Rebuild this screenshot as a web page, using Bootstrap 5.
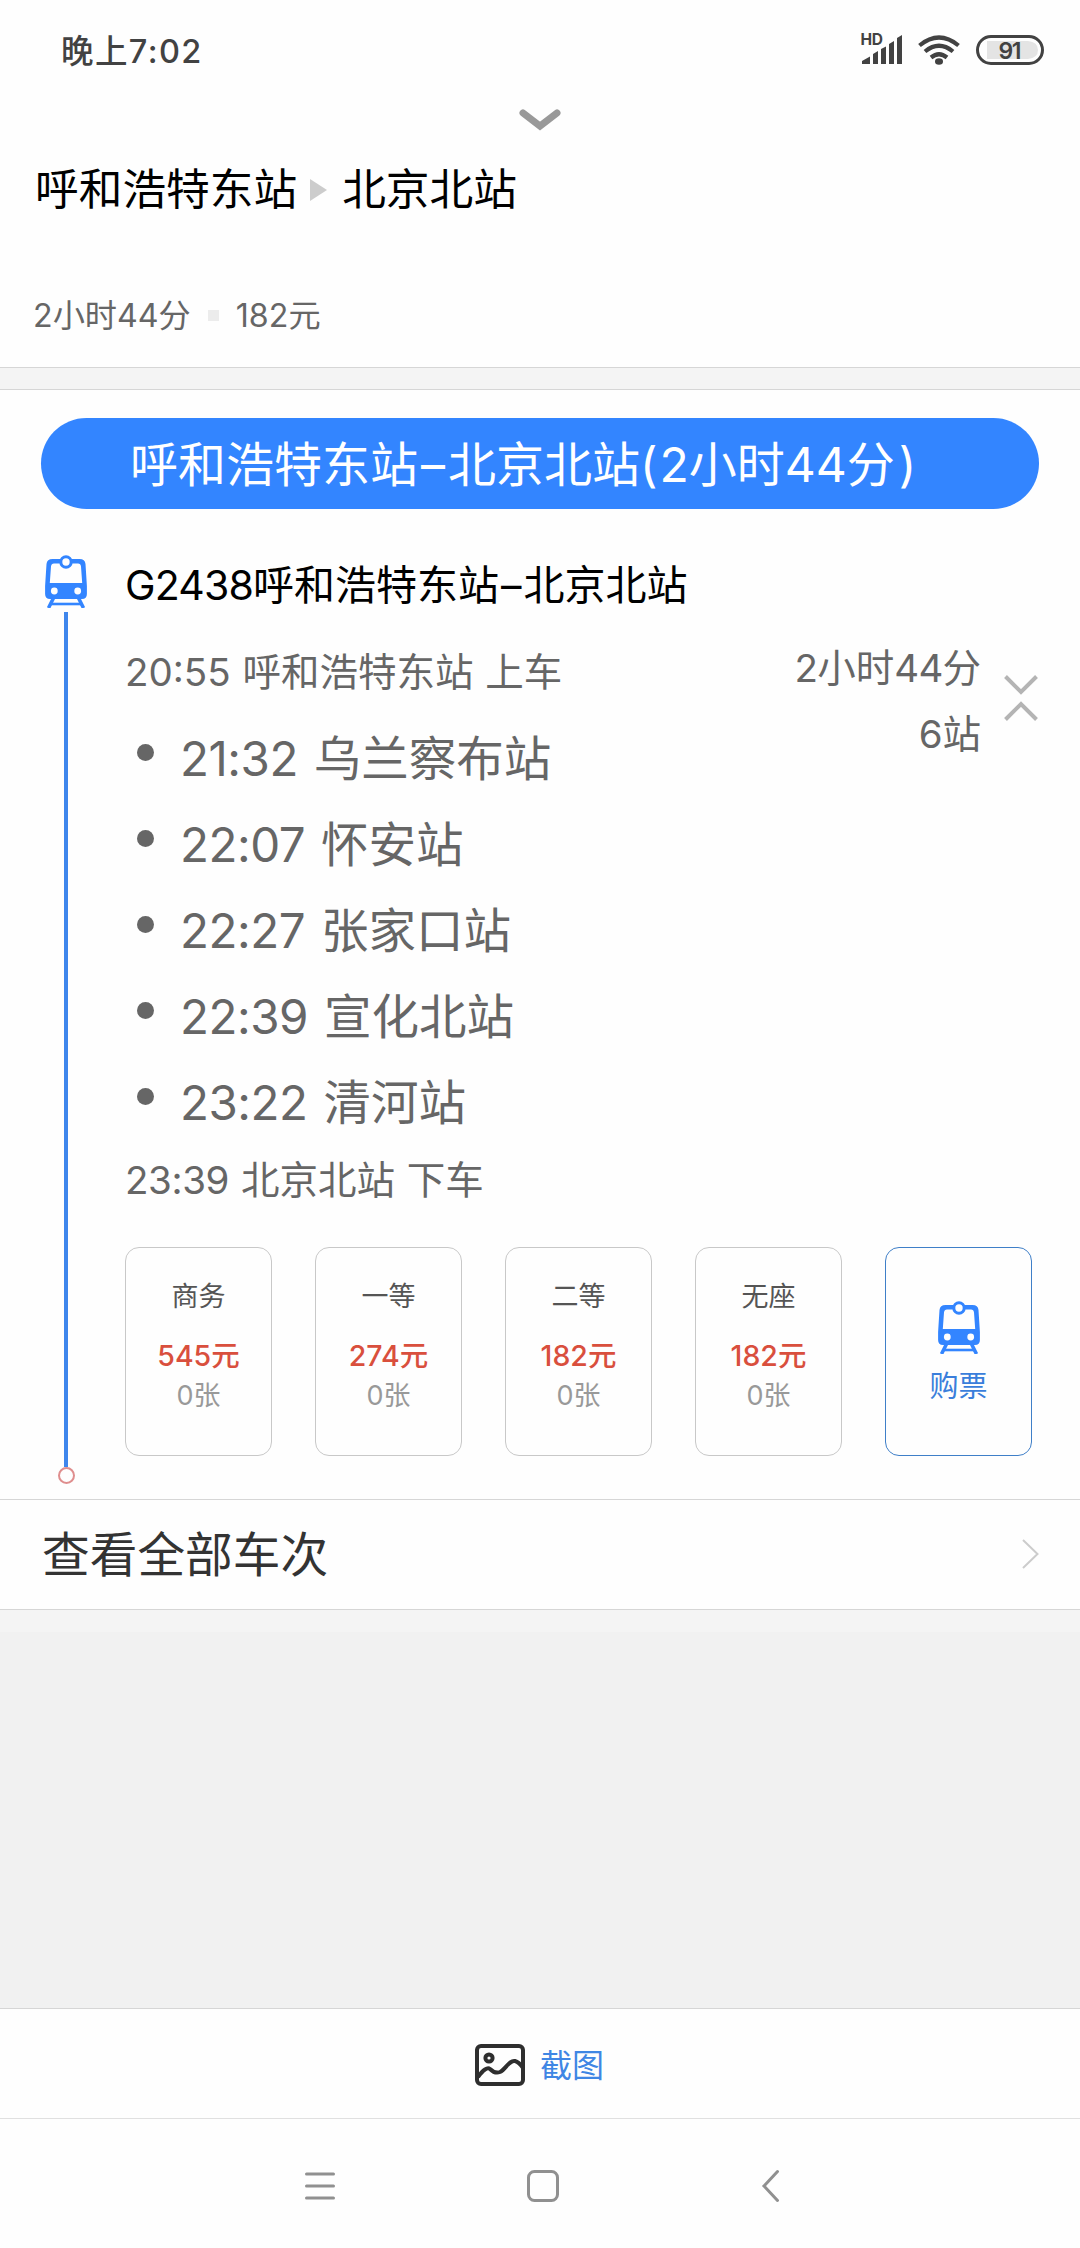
<!DOCTYPE html>
<html lang="zh-CN">
<head>
<meta charset="utf-8">
<meta name="viewport" content="width=device-width, initial-scale=1">
<title>呼和浩特东站 - 北京北站</title>
<link href="https://cdn.jsdelivr.net/npm/bootstrap@5.3.0/dist/css/bootstrap.min.css" rel="stylesheet">
<style>
  body { font-family: Inter, "Noto Sans CJK SC", sans-serif; background: #f1f1f1; color: #666; line-height: 1; font-weight: 400; }
  svg { display: block; flex: none; overflow: visible; }
  .screen { width: 1080px; height: 2248px; overflow: hidden; }
  .surface { background: #fefefe; }
  .text-line { white-space: nowrap; }
  .num { letter-spacing: -.01em; }
  .statusbar { height: 102px; padding: 0 36px 2px 61px; color: #424242; }
  .clock { font-size: 32.5px; font-weight: 500; letter-spacing: 1.4px; padding-top: 4px; }
  .pull { height: 36px; padding-top: 7px; }
  .route { height: 102px; padding: 1px 0 0 35px; font-size: 43.7px; color: #000; }
  .arrow { margin: 0 16px 0 11px; }
  .summary { height: 127px; padding: 60px 0 0 33px; font-size: 32.2px; }
  .dot-sep { width: 11px; height: 11px; background: #ececec; margin: -2px 17px 0; }
  .band { height: 23px; background: #f4f4f4; border-top: 1px solid #d6d6d6; border-bottom: 1px solid #d6d6d6; }
  .plan { height: 1109px; padding: 28px 41px 0; }
  .pill { height: 91px; background: #3385ff; color: #fff; font-size: 48px; padding: 3px 0 0 89px; }
  .pill .dash { margin: 0 3px; }
  .pill .open { margin-right: 2px; }
  .pill .shut { margin-left: 4px; }
  .rail { width: 50px; margin-top: 46px; }
  .track { width: 4px; height: 855px; background: #3f86ec; margin-top: 4px; }
  .terminus { width: 17px; height: 17px; border: 2px solid #df8e8e; border-radius: 50%; }
  .detail { width: 908px; margin-left: 34px; }
  .train-name { height: 64px; margin-top: 46px; padding-bottom: 4px; font-size: 41px; color: #000; }
  .train-name .num { letter-spacing: -.02em; }
  .train-name .dash { margin: 0 2px; }
  .leg { font-size: 38.5px; }
  .leg-info { width: 520px; }
  .board { height: 97px; padding-top: 9px; word-spacing: 1px; }
  .stops { margin: 0; font-size: 47.5px; word-spacing: 2.500px; }
  .stops li { height: 86px; padding-left: 12px; }
  .stops li::before { content: ""; width: 17px; height: 17px; border-radius: 50%; background: #666; margin: -13px 26px 0 0; }
  .alight { margin-top: 15px; word-spacing: 1px; }
  .leg-side { gap: 23px; margin: 16px -5px 0 0; }
  .leg-side svg { margin-top: 40px; }
  .leg-side .text-line { height: 66px; line-height: 66px; }
  .leg-side .num { letter-spacing: -.02em; }
  .seats { gap: 43px; margin-top: 47px; }
  .seat { width: 147px; height: 209px; border: 1px solid #c8c8c8; border-radius: 14px; font-size: 27px; padding-top: 34px; background: #fefefe; }
  .seat-kind { color: #555; height: 30px; line-height: 30px; }
  .seat-price { color: #d94f3d; font-size: 28.5px; font-weight: 500; height: 40px; line-height: 40px; margin-top: 24px; }
  .seat-left { color: #999; height: 40px; line-height: 40px; }
  .seat-buy { border-color: #3f7fc8; color: #3a7edb; font-size: 29px; padding-top: 53px; }
  .buy-label { padding-top: 18px; }
  .all-trains { height: 111px; border-top: 1px solid #d6d6d6; border-bottom: 1px solid #d6d6d6; font-size: 47.7px; color: #333; padding: 0 41px 0 42px; }
  .all-trains .text-line { padding-top: 3px; }
  .all-trains svg { margin-bottom: 2px; }
  .filler-top { height: 22px; background: #f4f4f4; }
  .filler { height: 376px; }
  .toolbar { height: 110px; border-top: 1px solid #d6d6d6; font-size: 32px; color: #3f86e4; padding: 2px 0 0 475px; gap: 15px; }
  .toolbar .text-line { padding-top: 3px; }
  .sysnav { height: 130px; border-top: 1px solid #e0e0e0; padding: 4px 301px 0 305px; }
  .home { margin: 0 203px 0 192px; }
</style>
</head>
<body>
<svg width="0" height="0" class="position-absolute">
  <defs>
    <symbol id="train" viewBox="0 0 42 53">
      <path fill="#3385ff" fill-rule="evenodd" d="M7.500 4h27q5.500 0 6 5l1.400 22v8q0 5-5 5H5.100q-5 0-5-5v-8L1.500 9q.5-5 6-5zM9 8.500q-2.700 0-3 3L4.800 28h32.400L36 11.500q-.3-3-3-3z"/>
      <circle cx="21" cy="7" r="5.200" fill="#fefefe" stroke="#3385ff" stroke-width="3"/>
      <circle cx="9.300" cy="36" r="3.400" fill="#fefefe"/><circle cx="32.700" cy="36" r="3.400" fill="#fefefe"/>
      <path fill="none" stroke="#3385ff" stroke-width="3.600" d="M8.500 43 3.500 53M33.500 43l5 10"/>
      <path fill="none" stroke="#3385ff" stroke-width="2.600" d="M6 49h30"/>
    </symbol>
  </defs>
</svg>
<main class="screen d-flex flex-column">
  <header class="surface">
    <div class="statusbar d-flex align-items-center justify-content-between">
      <div class="clock text-line">晚上7:02</div>
      <svg width="184" height="34" viewBox="860 33 184 34">
        <text x="860.500" y="45" font-size="15.500" font-weight="700" fill="#424242" textLength="22.500">HD</text>
        <g fill="#424242"><path d="M862 64v-3l8-4.500v7.500zM873 64V54l5-3v13zM881 64V49l5-2.500V64zM889 64V44l5-3v23zM897 64V38l5-3v29z"/></g>
        <g fill="none" stroke="#424242" stroke-width="4.200"><path d="M919.500 45.500Q939 29.500 958.500 45.500M925 51.500q14-11.500 28 0M931 57.500q8-6.500 16 0"/></g>
        <ellipse cx="939" cy="61.500" rx="4" ry="3.200" fill="#424242"/>
        <rect x="977.500" y="36.500" width="65" height="27" rx="13.500" fill="none" stroke="#424242" stroke-width="3"/>
        <path d="M987 41h41q10 1 10 9t-10 9h-41z" fill="#e4e4e4"/>
        <text x="998.500" y="58.500" font-size="23" font-weight="600" fill="#424242" textLength="23">91</text>
      </svg>
    </div>
    <div class="pull d-flex justify-content-center">
      <svg width="42" height="21"><path d="M4 4l17 13L38 4" fill="none" stroke="#999" stroke-width="7" stroke-linecap="round"/></svg>
    </div>
    <div class="route d-flex align-items-center">
      <span class="text-line">呼和浩特东站</span>
      <svg class="arrow" width="18" height="22"><path d="M2 0v22l17-11z" fill="#ccc"/></svg>
      <span class="text-line">北京北站</span>
    </div>
    <div class="summary d-flex">
      <div class="d-flex align-items-center align-self-start">
        <span class="text-line">2小时44分</span><i class="dot-sep"></i><span class="text-line">182元</span>
      </div>
    </div>
  </header>
  <div class="band"></div>

  <section class="plan surface">
    <div class="pill rounded-pill d-flex align-items-center"><span class="text-line">呼和浩特东站<span class="dash">–</span>北京北站<span class="open">(</span>2小时44分<span class="shut">)</span></span></div>
    <div class="d-flex">
      <div class="rail d-flex flex-column align-items-center">
        <svg width="42" height="53"><use href="#train"/></svg>
        <div class="track"></div>
        <div class="terminus"></div>
      </div>
      <div class="detail">
        <div class="train-name d-flex align-items-center"><span class="text-line"><span class="num">G2438</span>呼和浩特东站<span class="dash">–</span>北京北站</span></div>
        <div class="leg d-flex justify-content-between">
          <div class="leg-info">
            <div class="board d-flex align-items-center text-line">20:55 呼和浩特东站 上车</div>
            <ul class="stops list-unstyled">
              <li class="d-flex align-items-center"><span class="text-line"><span class="num">21:32</span> 乌兰察布站</span></li>
              <li class="d-flex align-items-center"><span class="text-line"><span class="num">22:07</span> 怀安站</span></li>
              <li class="d-flex align-items-center"><span class="text-line"><span class="num">22:27</span> 张家口站</span></li>
              <li class="d-flex align-items-center"><span class="text-line"><span class="num">22:39</span> 宣化北站</span></li>
              <li class="d-flex align-items-center"><span class="text-line"><span class="num">23:22</span> 清河站</span></li>
            </ul>
            <div class="alight text-line"><span class="num">23:39</span> 北京北站 下车</div>
          </div>
          <div class="leg-side d-flex">
            <div class="text-end">
              <div class="text-line"><span class="num">2</span>小时<span class="num">44</span>分</div>
              <div class="text-line">6站</div>
            </div>
            <svg width="34" height="46"><path d="M1.500 1.500 17 17 32.500 1.500M1.500 44.500 17 29l15.500 15.500" fill="none" stroke="#b4b4b4" stroke-width="4"/></svg>
          </div>
        </div>
        <div class="seats d-flex">
          <div class="seat text-center"><div class="seat-kind">商务</div><div class="seat-price">545元</div><div class="seat-left">0张</div></div>
          <div class="seat text-center"><div class="seat-kind">一等</div><div class="seat-price">274元</div><div class="seat-left">0张</div></div>
          <div class="seat text-center"><div class="seat-kind">二等</div><div class="seat-price">182元</div><div class="seat-left">0张</div></div>
          <div class="seat text-center"><div class="seat-kind">无座</div><div class="seat-price">182元</div><div class="seat-left">0张</div></div>
          <div class="seat seat-buy d-flex flex-column align-items-center"><svg width="42" height="53"><use href="#train"/></svg><div class="buy-label">购票</div></div>
        </div>
      </div>
    </div>
  </section>

  <div class="all-trains surface d-flex align-items-center justify-content-between">
    <span class="text-line">查看全部车次</span>
    <svg width="17" height="30"><path d="M1 1l14.500 14L1 29" fill="none" stroke="#ccc" stroke-width="2"/></svg>
  </div>
  <div class="filler-top"></div>
  <div class="filler"></div>

  <div class="toolbar surface d-flex align-items-center">
    <svg width="50" height="42" fill="none" stroke="#2e2e2e" stroke-width="4"><rect x="2" y="2" width="46" height="38" rx="4"/><circle cx="14" cy="14" r="3.600"/><path d="M3 33q8-11 12-8 5 5 10 3c6-3 9-12 15-11q4 1 8 7"/></svg>
    <span class="text-line">截图</span>
  </div>
  <nav class="sysnav surface d-flex align-items-center">
    <svg width="30" height="32" stroke="#909090" stroke-width="3" stroke-linecap="round"><path d="M1.500 4h27M1.500 16h27M1.500 28h27"/></svg>
    <svg class="home" width="32" height="32"><rect x="1.500" y="1.500" width="29" height="29" rx="6" fill="none" stroke="#909090" stroke-width="3"/></svg>
    <svg width="17" height="32"><path d="M15.500 1.500 2 16l13.500 14.500" fill="none" stroke="#909090" stroke-width="3" stroke-linecap="round"/></svg>
  </nav>
</main>
<script src="https://cdn.jsdelivr.net/npm/bootstrap@5.3.0/dist/js/bootstrap.bundle.min.js"></script>
</body>
</html>
